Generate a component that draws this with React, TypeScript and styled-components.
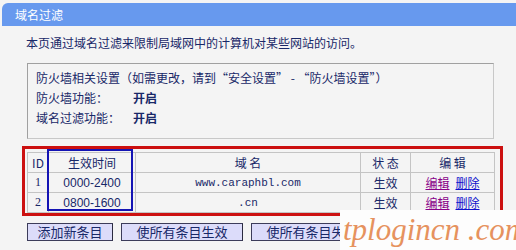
import styled, { createGlobalStyle } from 'styled-components';

const GlobalStyle = createGlobalStyle`
    body {
        margin: 0;
        background: #f4f4f4;
        font-family: "Noto Sans CJK SC", "Liberation Sans", sans-serif;
        font-size: 12px;
        color: #182868;
    }
`;

const Page = styled.div`
    position: relative;
    width: 516px;
    height: 250px;
    overflow: hidden;
    padding-top: 3px;
    box-sizing: border-box;
`;

const TitleBar = styled.div`
    margin-left: 2px;
    height: 23px;
    background: #6799ee;
    border-top-left-radius: 6px;
    color: #fff;
    font-size: 12px;
    line-height: 23px;
    padding-left: 13px;
`;

const Intro = styled.div`
    margin: 10px 0 0 26px;
    line-height: 14px;
`;

const InfoBox = styled.div`
    margin: 13px 0 0 27px;
    width: 467px;
    height: 76px;
    border: 1px solid #a0a0a0;
    border-right-color: #c8c8c8;
    border-bottom-color: #c8c8c8;
    padding: 7px 0 0 8px;
    box-sizing: border-box;
    display: flex;
    flex-direction: column;
    gap: 6px;
    line-height: 14px;
`;

const InfoRow = styled.div`
    display: flex;
`;

const Label = styled.span`
    width: 97px;
`;

const Value = styled.span`
    font-weight: bold;
`;

const RedFrame = styled.div`
    position: relative;
    margin: 7px 0 0 22px;
    width: 481px;
    height: 70px;
    border: 3px solid #cc1010;
    box-sizing: border-box;
    padding: 3px 0 0 2px;
`;

const Table = styled.table`
    border-collapse: collapse;
    width: 468px;
    border: 1px solid #a8a8a8;
`;

const Th = styled.th<{ $w?: number }>`
    width: ${p => (p.$w ? p.$w + 'px' : 'auto')};
    height: 19px;
    padding: 0;
    font-weight: normal;
    font-size: 12px;
    border: 1px solid #c4c4c4;
    text-align: center;
`;

const Td = styled.td<{ $mono?: boolean }>`
    height: 19px;
    padding: 0;
    border: 1px solid #c4c4c4;
    text-align: center;
    font-size: ${p => (p.$mono ? '11px' : '12px')};
    font-family: ${p => (p.$mono ? '"Liberation Mono", monospace' : 'inherit')};
`;

const IdCell = styled(Td)`
    font-family: "Liberation Serif", serif;
    font-size: 12px;
`;

const TimeCell = styled(Td)`
    font-family: "Liberation Sans", sans-serif;
    font-size: 12px;
`;

const Link = styled.a<{ $visited?: boolean }>`
    color: ${p => (p.$visited ? '#880088' : '#1010cc')};
    text-decoration: underline;
    margin: 0 3px;
`;

const BlueMark = styled.div`
    position: absolute;
    left: 22px;
    top: 0px;
    width: 86px;
    height: 62px;
    border: 2px solid #1414b4;
    box-sizing: border-box;
`;

const ButtonRow = styled.div`
    display: flex;
    gap: 8px;
    margin: 7px 0 0 27px;
`;

const Button = styled.button<{ $w: number }>`
    width: ${p => p.$w}px;
    height: 18px;
    padding: 0;
    background: #dcdcfa;
    border: 1px solid #3c3c5a;
    border-right-color: #2a2a40;
    color: #182868;
    font-family: "Noto Sans CJK SC", sans-serif;
    font-size: 13px;
    line-height: 16px;
`;

const Watermark = styled.div`
    position: absolute;
    left: 340px;
    top: 210px;
    width: 176px;
    height: 40px;
    background: #fdfdfd;
    color: #e6925e;
    font-family: "Liberation Serif", serif;
    font-style: italic;
    font-size: 31px;
    line-height: 40px;
    padding-left: 3px;
    box-sizing: border-box;
    white-space: nowrap;
`;

const rows = [
    { id: 1, time: '0000-2400', domain: 'www.caraphbl.com' },
    { id: 2, time: '0800-1600', domain: '.cn' },
];

export default function App() {
    return (
        <>
            <GlobalStyle />
            <Page>
                <TitleBar>域名过滤</TitleBar>
                <Intro>本页通过域名过滤来限制局域网中的计算机对某些网站的访问。</Intro>
                <InfoBox>
                    <div>防火墙相关设置（如需更改，请到“安全设置” - “防火墙设置”）</div>
                    <InfoRow>
                        <Label>防火墙功能：</Label>
                        <Value>开启</Value>
                    </InfoRow>
                    <InfoRow>
                        <Label>域名过滤功能：</Label>
                        <Value>开启</Value>
                    </InfoRow>
                </InfoBox>
                <RedFrame>
                    <Table>
                        <thead>
                            <tr>
                                <Th $w={20}>ID</Th>
                                <Th $w={86}>生效时间</Th>
                                <Th>域 名</Th>
                                <Th $w={49}>状 态</Th>
                                <Th $w={83}>编 辑</Th>
                            </tr>
                        </thead>
                        <tbody>
                            {rows.map(r => (
                                <tr key={r.id}>
                                    <IdCell>{r.id}</IdCell>
                                    <TimeCell>{r.time}</TimeCell>
                                    <Td $mono>{r.domain}</Td>
                                    <Td>生效</Td>
                                    <Td>
                                        <Link $visited>编辑</Link>
                                        <Link>删除</Link>
                                    </Td>
                                </tr>
                            ))}
                        </tbody>
                    </Table>
                    <BlueMark />
                </RedFrame>
                <ButtonRow>
                    <Button $w={86}>添加新条目</Button>
                    <Button $w={122}>使所有条目生效</Button>
                    <Button $w={122}>使所有条目失效</Button>
                </ButtonRow>
                <Watermark>tplogincn .com</Watermark>
            </Page>
        </>
    );
}
